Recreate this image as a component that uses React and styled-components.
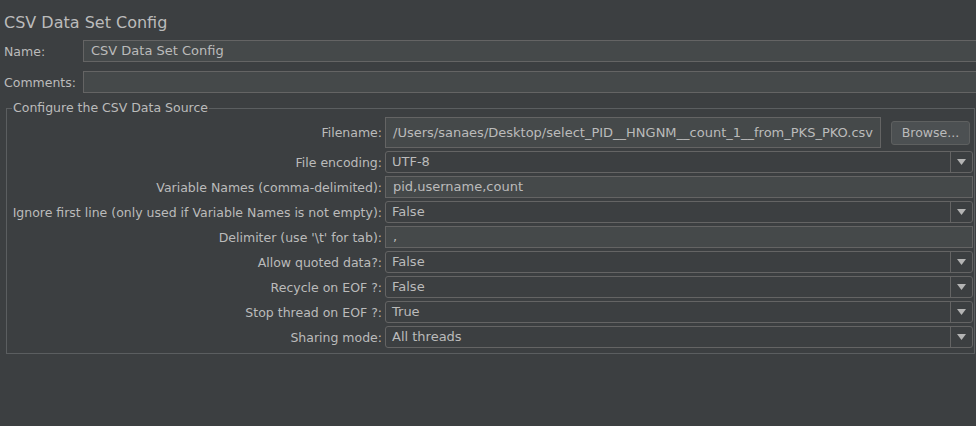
import React from "react";
import styled, { createGlobalStyle } from "styled-components";

const GlobalStyle = createGlobalStyle`
  html, body {
    margin: 0;
    padding: 0;
    background: #3c3f41;
    overflow: hidden;
  }
  body {
    font-family: "DejaVu Sans", "Liberation Sans", sans-serif;
    color: #bbbbbb;
  }
`;

const fields = [
  { label: "File encoding:", value: "UTF-8", kind: "combo" },
  { label: "Variable Names (comma-delimited):", value: "pid,username,count", kind: "text" },
  { label: "Ignore first line (only used if Variable Names is not empty):", value: "False", kind: "combo" },
  { label: "Delimiter (use '\\t' for tab):", value: ",", kind: "text" },
  { label: "Allow quoted data?:", value: "False", kind: "combo" },
  { label: "Recycle on EOF ?:", value: "False", kind: "combo" },
  { label: "Stop thread on EOF ?:", value: "True", kind: "combo" },
  { label: "Sharing mode:", value: "All threads", kind: "combo" },
];

function Combo({ value }) {
  return (
    <ComboBox>
      <ComboValue>{value}</ComboValue>
      <ComboArrow>
        <svg width="9" height="6" viewBox="0 0 9 6">
          <path d="M0 0 H9 L4.5 6 Z" fill="#b4b4b4" />
        </svg>
      </ComboArrow>
    </ComboBox>
  );
}

function App() {
  return (
    <>
      <GlobalStyle />
      <Page>
        <Title>CSV Data Set Config</Title>
        <TopRow>
          <TopLabel>Name:</TopLabel>
          <TextField>CSV Data Set Config</TextField>
        </TopRow>
        <TopRow>
          <TopLabel>Comments:</TopLabel>
          <TextField />
        </TopRow>
        <Group>
          <Legend>Configure the CSV Data Source</Legend>
          <Form>
            <Label>Filename:</Label>
            <FileRow>
              <FileField>/Users/sanaes/Desktop/select_PID__HNGNM__count_1__from_PKS_PKO.csv</FileField>
              <Button>Browse...</Button>
            </FileRow>
            {fields.map(f => (
              <React.Fragment key={f.label}>
                <Label>{f.label}</Label>
                {f.kind === "combo" ? <Combo value={f.value} /> : <TextField>{f.value}</TextField>}
              </React.Fragment>
            ))}
          </Form>
        </Group>
      </Page>
    </>
  );
}

const Page = styled.div`
  width: 976px;
  height: 426px;
  padding-top: 12px;
  box-sizing: border-box;
`;

const Title = styled.div`
  font-size: 16px;
  line-height: 22px;
  padding-left: 4px;
  margin-bottom: 6px;
`;

const TopRow = styled.div`
  display: grid;
  grid-template-columns: 83px 1fr;
  align-items: center;
  height: 22px;
  margin-right: -12px;
  margin-bottom: 9px;
  font-size: 12.5px;
`;

const TopLabel = styled.div`
  padding-left: 4px;
`;

const TextField = styled.div`
  height: 22px;
  box-sizing: border-box;
  background: #45494a;
  border: 1px solid #646464;
  padding: 0 7px;
  font-size: 13px;
  line-height: 20px;
  white-space: nowrap;
  overflow: hidden;
`;

const Group = styled.fieldset`
  margin: -2px 1px 0 6px;
  padding: 3px 3px 5px 1px;
  border: 1px solid #5b5e60;
  min-width: 0;
`;

const Legend = styled.legend`
  font-size: 12.5px;
  padding: 0 1px;
  margin-left: 4px;
  line-height: 16px;
`;

const Form = styled.div`
  display: grid;
  grid-template-columns: 374px 1fr;
  column-gap: 3px;
  row-gap: 3px;
  align-items: center;
  font-size: 12.5px;
  margin-top: -2px;
`;

const Label = styled.div`
  text-align: right;
  white-space: nowrap;
`;

const FileRow = styled.div`
  display: flex;
  align-items: center;
  gap: 10px;
`;

const FileField = styled(TextField)`
  flex: 1;
  height: 31px;
  line-height: 29px;
`;

const Button = styled.div`
  width: 79px;
  height: 24px;
  box-sizing: border-box;
  background: #4c5052;
  border: 1px solid #5e6060;
  border-radius: 3px;
  font-size: 12.5px;
  line-height: 22px;
  text-align: center;
  margin-right: 3px;
`;

const ComboBox = styled.div`
  display: flex;
  height: 22px;
  box-sizing: border-box;
  border: 1px solid #646464;
  border-radius: 3px;
  background: #3c3f41;
  font-size: 13px;
`;

const ComboValue = styled.div`
  flex: 1;
  padding: 0 6px;
  line-height: 20px;
`;

const ComboArrow = styled.div`
  width: 21px;
  border-left: 1px solid #646464;
  display: flex;
  align-items: center;
  justify-content: center;
`;

export default App;
